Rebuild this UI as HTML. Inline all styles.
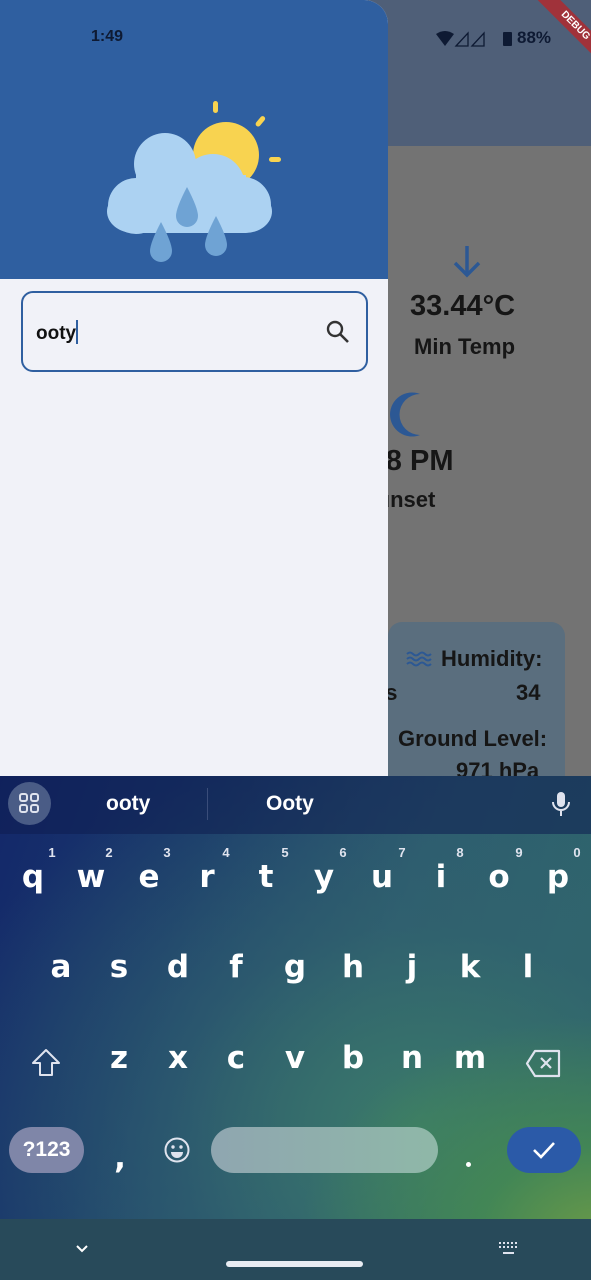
<!DOCTYPE html>
<html><head><meta charset="utf-8"><style>
*{margin:0;padding:0;box-sizing:border-box}
body{width:591px;height:1280px;position:relative;overflow:hidden;font-family:"Liberation Sans",sans-serif;background:#737373}
.abs{position:absolute}
.bt{font-weight:bold;color:#161616}
.key{position:absolute;color:#fff;font-size:31px;font-weight:bold;transform:translateX(-50%);font-family:"DejaVu Sans","Liberation Sans",sans-serif}
.num{position:absolute;color:#dfe3ee;font-size:13px;font-weight:bold;transform:translateX(-50%)}
</style></head><body>
<div class="abs" style="left:0;top:0;width:591px;height:146px;background:#4f5f78"></div>
<div class="abs" style="left:0;top:146px;width:591px;height:640px;background:#737373"></div>
<svg class="abs" style="left:447px;top:243px" width="40" height="36"><path d="M20 3V32M8 20L20 32L32 20" stroke="#2c5894" stroke-width="3.5" fill="none"/></svg>
<div class="abs bt" style="left:410px;top:290px;font-size:29px">33.44°C</div>
<div class="abs bt" style="left:414px;top:334px;font-size:22px">Min Temp</div>
<svg class="abs" style="left:380px;top:385px" width="50" height="60"><path d="M40 9A22 22 0 1 0 40 50A18 18 0 0 1 40 9Z" fill="#2c5894"/></svg>
<div class="abs bt" style="left:360px;top:445px;font-size:29px">:08 PM</div>
<div class="abs bt" style="left:362px;top:487px;font-size:22px">Sunset</div>
<div class="abs" style="left:388px;top:622px;width:177px;height:170px;background:#5a6e7e;border-radius:14px"></div>
<svg class="abs" style="left:405px;top:650px" width="28" height="18"><path d="M2 4q3-3 6 0t6 0t6 0t6 0M2 9q3-3 6 0t6 0t6 0t6 0M2 14q3-3 6 0t6 0t6 0t6 0" stroke="#2c5894" stroke-width="2" fill="none"/></svg>
<div class="abs bt" style="left:441px;top:646px;font-size:22px">Humidity:</div>
<div class="abs bt" style="left:380px;top:680px;font-size:22px">'s</div>
<div class="abs bt" style="left:516px;top:680px;font-size:22px">34</div>
<div class="abs bt" style="left:398px;top:726px;font-size:22px">Ground Level:</div>
<div class="abs bt" style="left:456px;top:758px;font-size:22px">971 hPa</div>
<div class="abs" style="left:520px;top:18px;width:110px;height:16px;background:#a0323a;transform:rotate(45deg);color:#fff;font-size:10px;font-weight:bold;text-align:center;line-height:16px">DEBUG</div>
<div class="abs" style="left:0;top:0;width:388px;height:776px;background:#f1f2f8;border-top-right-radius:24px;overflow:hidden">
<div class="abs" style="left:0;top:0;width:388px;height:279px;background:#2f5fa0"></div>
<div class="abs" style="left:91px;top:28px;font-size:16px;font-weight:bold;color:#0e1a33">1:49</div>
<svg class="abs" style="left:0;top:0" width="388" height="279">
<circle cx="226" cy="155" r="33" fill="#f8d350"/>
<rect x="213" y="101" width="5" height="12" rx="2.5" fill="#f8d350"/>
<rect x="258" y="115" width="5" height="12" rx="2.5" fill="#f8d350" transform="rotate(40 260 121)"/>
<rect x="269" y="157" width="12" height="5" rx="2.5" fill="#f8d350"/>
<g fill="#acd2f2"><circle cx="165" cy="164" r="31"/><circle cx="213" cy="186" r="32"/><circle cx="243" cy="205" r="28"/><circle cx="136" cy="206" r="28"/><rect x="107" y="190" width="165" height="43" rx="27"/><rect x="136" y="175" width="110" height="58"/></g>
<g fill="#6fa3d4"><path d="M187 187Q176 208 176 216A11 11 0 0 0 198 216Q198 208 187 187Z"/><path d="M161 222Q150 243 150 251A11 11 0 0 0 172 251Q172 243 161 222Z"/><path d="M216 216Q205 237 205 245A11 11 0 0 0 227 245Q227 237 216 216Z"/></g>
</svg>
<div class="abs" style="left:21px;top:291px;width:347px;height:81px;border:2px solid #2f5fa0;border-radius:12px"></div>
<div class="abs" style="left:36px;top:320px;font-size:19px;font-weight:bold;color:#111">ooty<span style="display:inline-block;width:2px;height:24px;background:#2f5fa0;vertical-align:-5px"></span></div>
<svg class="abs" style="left:324px;top:318px" width="28" height="28"><circle cx="11" cy="11" r="7" stroke="#333" stroke-width="2.4" fill="none"/><path d="M16 16L24 24" stroke="#333" stroke-width="2.6"/></svg>
</div>
<svg class="abs" style="left:436px;top:31px" width="80" height="16"><path d="M0 3Q9-3 18 3L9 15Z" fill="#0e1a33"/><path d="M20 15L32 2V15Z" stroke="#0e1a33" stroke-width="1.3" fill="none"/><path d="M36 15L48 2V15Z" stroke="#0e1a33" stroke-width="1.3" fill="none"/><rect x="67" y="1" width="9" height="14" rx="1" fill="#0e1a33"/></svg>
<div class="abs" style="left:517px;top:28px;font-size:17px;font-weight:bold;color:#0e1a33">88%</div>
<div class="abs" style="left:0;top:776px;width:591px;height:443px;background:radial-gradient(ellipse 300px 220px at 600px 460px,#6a9a48 0%,rgba(70,140,80,.8) 40%,rgba(60,120,100,0) 100%),radial-gradient(ellipse 500px 400px at 420px 350px,#3b7a6a 0%,rgba(50,100,110,.6) 50%,rgba(0,0,0,0) 100%),linear-gradient(110deg,#13276a 0%,#1a3a6c 30%,#2c5a70 60%,#2f6a6a 100%)"></div>
<div class="abs" style="left:0;top:776px;width:591px;height:58px;background:rgba(15,30,80,.55)"></div>
<div class="abs" style="left:8px;top:782px;width:43px;height:43px;border-radius:50%;background:#4a5c86"></div>
<svg class="abs" style="left:18px;top:792px" width="24" height="24"><g stroke="#dfe3ee" stroke-width="2" fill="none"><rect x="2" y="2" width="7" height="7" rx="2"/><rect x="13" y="2" width="7" height="7" rx="2"/><rect x="2" y="13" width="7" height="7" rx="2"/><rect x="13" y="13" width="7" height="7" rx="2"/></g></svg>
<div class="abs" style="left:106px;top:792px;color:#fff;font-size:21px;font-weight:bold">ooty</div>
<div class="abs" style="left:207px;top:788px;width:1px;height:32px;background:#3a4d7a"></div>
<div class="abs" style="left:266px;top:792px;color:#fff;font-size:21px;font-weight:bold">Ooty</div>
<svg class="abs" style="left:550px;top:790px" width="22" height="28"><rect x="7" y="2" width="8" height="15" rx="4" fill="#dfe3ee"/><path d="M3 12a8 8 0 0 0 16 0M11 20v6" stroke="#dfe3ee" stroke-width="2" fill="none"/></svg>
<div class="num" style="left:52px;top:845px">1</div><div class="num" style="left:109px;top:845px">2</div><div class="num" style="left:167px;top:845px">3</div><div class="num" style="left:226px;top:845px">4</div><div class="num" style="left:285px;top:845px">5</div><div class="num" style="left:343px;top:845px">6</div><div class="num" style="left:402px;top:845px">7</div><div class="num" style="left:460px;top:845px">8</div><div class="num" style="left:519px;top:845px">9</div><div class="num" style="left:577px;top:845px">0</div>
<div class="key" style="left:33px;top:859px">q</div><div class="key" style="left:91px;top:859px">w</div><div class="key" style="left:149px;top:859px">e</div><div class="key" style="left:207px;top:859px">r</div><div class="key" style="left:266px;top:859px">t</div><div class="key" style="left:324px;top:859px">y</div><div class="key" style="left:382px;top:859px">u</div><div class="key" style="left:441px;top:859px">i</div><div class="key" style="left:499px;top:859px">o</div><div class="key" style="left:558px;top:859px">p</div>
<div class="key" style="left:61px;top:949px">a</div><div class="key" style="left:119px;top:949px">s</div><div class="key" style="left:178px;top:949px">d</div><div class="key" style="left:236px;top:949px">f</div><div class="key" style="left:295px;top:949px">g</div><div class="key" style="left:353px;top:949px">h</div><div class="key" style="left:412px;top:949px">j</div><div class="key" style="left:470px;top:949px">k</div><div class="key" style="left:528px;top:949px">l</div>
<div class="key" style="left:119px;top:1040px">z</div><div class="key" style="left:178px;top:1040px">x</div><div class="key" style="left:236px;top:1040px">c</div><div class="key" style="left:295px;top:1040px">v</div><div class="key" style="left:353px;top:1040px">b</div><div class="key" style="left:412px;top:1040px">n</div><div class="key" style="left:470px;top:1040px">m</div>
<svg class="abs" style="left:30px;top:1047px" width="32" height="32"><path d="M16 3L3 16H10V28H22V16H29Z" stroke="#dfe3ee" stroke-width="2" fill="none" stroke-linejoin="round"/></svg>
<svg class="abs" style="left:525px;top:1049px" width="38" height="30"><path d="M10 2H34V27H10L2 14.5Z" stroke="#dfe3ee" stroke-width="2.2" fill="none" stroke-linejoin="round"/><path d="M16 9L26 19M26 9L16 19" stroke="#dfe3ee" stroke-width="2.2"/></svg>
<div class="abs" style="left:9px;top:1127px;width:75px;height:46px;border-radius:23px;background:#7f86a8;color:#fff;font-size:21px;font-weight:bold;text-align:center;line-height:46px">?123</div>
<div class="key" style="left:120px;top:1140px">,</div>
<svg class="abs" style="left:163px;top:1136px" width="28" height="28"><circle cx="14" cy="14" r="11.5" stroke="#dfe3ee" stroke-width="2" fill="none"/><circle cx="10" cy="11" r="1.7" fill="#dfe3ee"/><circle cx="18" cy="11" r="1.7" fill="#dfe3ee"/><path d="M8 16a6 6 0 0 0 12 0Z" fill="#dfe3ee"/></svg>
<div class="abs" style="left:211px;top:1127px;width:227px;height:46px;border-radius:23px;background:linear-gradient(90deg,#8fa6b0,#8fb8a8)"></div>
<div class="abs" style="left:466px;top:1162px;width:5px;height:5px;border-radius:50%;background:#fff"></div>
<div class="abs" style="left:507px;top:1127px;width:74px;height:46px;border-radius:23px;background:#2b5aa8"></div>
<svg class="abs" style="left:530px;top:1138px" width="28" height="24"><path d="M4 12L11 19L24 5" stroke="#fff" stroke-width="2.6" fill="none"/></svg>
<div class="abs" style="left:0;top:1219px;width:591px;height:61px;background:#284a5a"></div>
<svg class="abs" style="left:74px;top:1243px" width="16" height="12"><path d="M3 3L8 8L13 3" stroke="#fff" stroke-width="2" fill="none"/></svg>
<svg class="abs" style="left:498px;top:1241px" width="22" height="16"><g fill="#dfe3ee"><rect x="1" y="1" width="2" height="2"/><rect x="5" y="1" width="2" height="2"/><rect x="9" y="1" width="2" height="2"/><rect x="13" y="1" width="2" height="2"/><rect x="17" y="1" width="2" height="2"/><rect x="1" y="5" width="2" height="2"/><rect x="5" y="5" width="2" height="2"/><rect x="9" y="5" width="2" height="2"/><rect x="13" y="5" width="2" height="2"/><rect x="17" y="5" width="2" height="2"/><rect x="5" y="11" width="11" height="2"/></g></svg>
<div class="abs" style="left:226px;top:1261px;width:137px;height:6px;border-radius:3px;background:#e8ecf2"></div>
</body></html>
